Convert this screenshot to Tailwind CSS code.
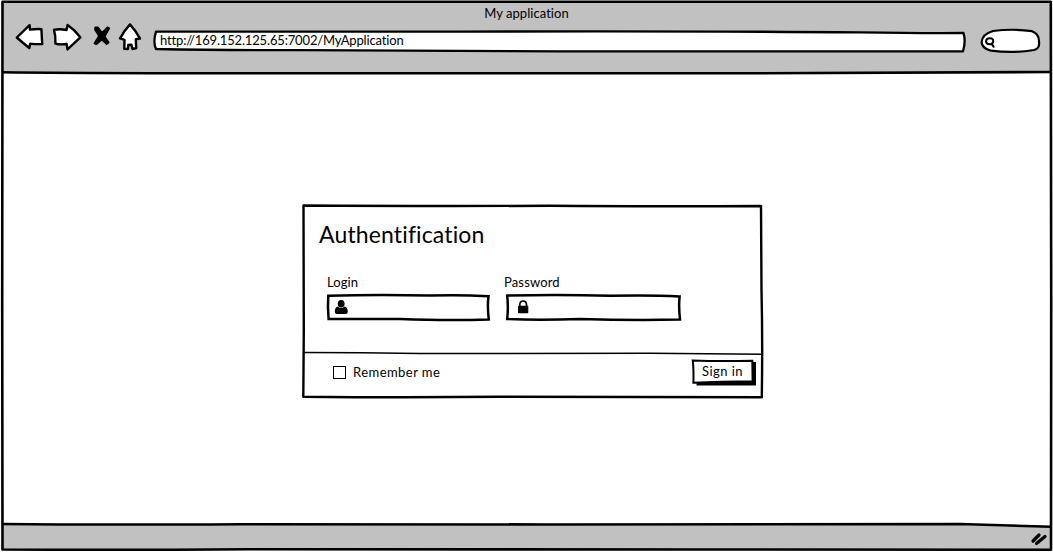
<!DOCTYPE html>
<html lang="en">
<head>
<meta charset="utf-8">
<title>My application</title>
<script src="https://cdn.jsdelivr.net/npm/@tailwindcss/browser@4"></script>
</head>
<body class="bg-white">
<div class="relative flex h-[552px] w-[1053px] flex-col overflow-hidden bg-white font-['Lato',sans-serif] text-[13px] leading-4 text-black">
  <header class="h-[73px] shrink-0 bg-[#c1c1c1] pt-[5px]">
    <h1 class="h-4 text-center tracking-[0.05px]">My application</h1>
    <div class="flex items-start pl-[14px]">
      <svg class="h-8 w-[137px] shrink-0" viewBox="14 21 137 32" fill="#fff" stroke="#000" stroke-width="2.4" stroke-linejoin="round" stroke-linecap="round">
        <path d="M16.8 37.5 L29.6 25.2 L30 29.6 Q36 28.8 41.4 29.2 L42.2 44 Q36 44.4 30.3 43.6 L29.3 48 Q23 43 16.8 37.5Z"/>
        <path d="M54 29.8 Q60 28.6 66.5 30 L67.6 25 Q75 30 80.4 37.4 L67.5 49.4 L66.6 44 Q60 45 55.4 43.6 Q55.8 36 54 29.8Z"/>
        <path d="M95.3 27.5 L98 27.5 L102 33 L107.5 27.4 L109.2 28.4 L104.6 36.5 L108.6 42.6 L106.6 44 L101.8 39.6 L96.2 44.2 L94.4 43.4 L99 36 L95 29.5Z" fill="#000" stroke-width="1.8"/>
        <path d="M130 24.4 Q136 31 140 38.6 L135.8 39.3 L136.2 48.2 L132.5 49 L131.4 44.8 L128.2 45 L128 49 L124.3 48.8 L124.5 39.8 L120 38.4 Q124 31 130 24.4Z"/>
      </svg>
      <div class="relative mt-2 h-6 w-[816px] shrink-0">
        <svg class="absolute inset-0 h-6 w-[816px]" viewBox="151 29 816 24"><path d="M156 31.6 Q300 31 460 31.6 Q700 31 860 32.4 Q920 33.3 963.5 33 Q966 41 963 51.4 L560 51.3 Q420 50.4 300 50.1 Q220 50.2 156 49 Q152.8 42 156 31.6Z" fill="#fff" stroke="#000" stroke-width="2.3" stroke-linejoin="round"/></svg>
        <span class="absolute top-[3px] left-[9px] whitespace-nowrap tracking-[-0.16px]">http://169.152.125.65:7002/MyApplication</span>
      </div>
      <svg class="mt-[5px] ml-3 h-7 w-[64px] shrink-0" viewBox="979 26 64 28" fill="#fff" stroke="#000" stroke-width="2.2" stroke-linecap="round"><path d="M993 31 Q1013 28.4 1032 31.2 Q1039.5 34 1039 42 Q1040 48.5 1034 50 Q1014 53.4 991 50.7 Q981.5 48 981.6 42 Q982.5 34 993 31Z"/><path d="M989.8 38.2 Q993.4 38.2 993.2 41.2 Q993.2 44.4 989.8 44.2 Q986.2 44.2 986 41.2 Q986.2 38.2 989.8 38.2Z M991.6 43.6 L993.6 46.8" stroke-width="2"/></svg>
    </div>
  </header>

  <main class="flex flex-1 pt-[131px] pl-[302px]">
    <section class="relative h-[196px] w-[462px]">
      <svg class="absolute inset-0 h-[196px] w-[462px]" viewBox="302 204 462 196" fill="none" stroke="#000" stroke-width="2.4" stroke-linejoin="round">
        <path d="M303.5 205.5 Q420 206.3 550 205.8 Q650 206.6 761 206 L761.5 290 Q762.7 340 761.8 397.3 Q620 397.4 500 396.8 Q400 397.8 303.3 396.7 L303.8 330 L303.5 205.5Z"/>
        <path d="M303 352.4 Q360 352.5 420 353.5 L650 353.2 L763 354.3" stroke-width="1.5"/>
      </svg>
      <h2 class="relative h-[70px] pt-4 pl-[17px] text-[23px] leading-7 tracking-[0.14px]">Authentification</h2>
      <div class="relative flex pl-[24px]">
        <label class="block w-[177px]">
          <span class="block h-[19px] pl-px tracking-[0.1px]">Login</span>
          <svg class="block h-[30px] w-[166px]" viewBox="326 293 166 30"><path d="M328.3 295.7 Q380 294.5 430 295.6 Q460 294.8 488.5 296.2 Q487.2 305 488.8 319.4 Q450 321 400 319 Q360 319.2 328.6 319 Q327.5 307 328.3 295.7Z" fill="#fff" stroke="#000" stroke-width="2.5"/><ellipse cx="341.2" cy="303.8" rx="3.4" ry="3.8"/><path d="M338 306.6 Q334.8 307.2 334.8 311.8 Q334.8 314 337 314 H345.6 Q347.8 314 347.8 311.8 Q347.6 307.2 344.4 306.6 Q341.2 309.6 338 306.6Z"/></svg>
        </label>
        <label class="block">
          <span class="block h-[19px] pl-px tracking-[0.15px]">Password</span>
          <svg class="block h-[30px] w-[180px]" viewBox="503 293 180 30"><path d="M507.2 295.6 Q560 294.5 610 295.8 Q650 294.8 679.6 296.5 Q678.5 306 680 319.6 Q630 320.6 580 318.9 Q540 320.3 507.2 319 Q508.5 307 507.2 295.6Z" fill="#fff" stroke="#000" stroke-width="2.5"/><rect x="518" y="305.7" width="10.3" height="7.5" rx="0.7"/><path d="M519.8 307 V304.5 Q520 301 523.1 301 Q526.3 301 526.5 304.5 V307" fill="none" stroke="#000" stroke-width="1.7"/></svg>
        </label>
      </div>
      <div class="relative mt-[35px] flex">
        <label class="flex h-8 flex-1 pt-[3px] pl-[31px]"><span class="mt-[5px] h-[13px] w-[13px] border border-black bg-white"></span><span class="mt-[3px] ml-[7px] tracking-[0.45px]">Remember me</span></label>
        <button class="relative mr-[7px] h-[30px] w-[67px]">
          <svg class="absolute inset-0 h-[30px] w-[67px]" viewBox="690 358 67 30"><path d="M697 362 H756 V385.5 H696.5Z"/><path d="M692.8 360.4 Q720 361.6 752.3 360.7 L752.6 381.3 Q720 381.8 693.4 382.7 Q693.8 370 692.8 360.4Z" fill="#fff" stroke="#000" stroke-width="2"/></svg>
          <span class="absolute top-[5px] left-3 whitespace-nowrap tracking-[0.45px]">Sign in</span>
        </button>
      </div>
    </section>
  </main>

  <footer class="h-[27px] shrink-0"><svg class="block h-[27px] w-[1053px]" viewBox="0 525 1053 27"><path d="M2 524.5 L960 524.5 L1051 527 V549 H2Z" fill="#c1c1c1"/><path d="M1033 541 L1039 535 M1036.5 543.5 L1045 536.5" stroke="#000" stroke-width="3.2" stroke-linecap="round"/></svg></footer>

  <svg class="pointer-events-none absolute inset-0 h-[552px] w-[1053px]" viewBox="0 0 1053 552" fill="none" stroke="#000" stroke-width="2.6" stroke-linejoin="round">
    <path d="M0 0H2V552H0Z M1052 0H1053V552H1052Z M0 0H1053V1H0Z" fill="#fff" stroke="none"/>
    <path d="M2.5 1.8 H1050.8 L1051.2 300 L1051 549.8 Q850 550.3 700 549.5 Q400 549.6 250 549.2 Q120 550.2 2.5 549.5 L2.2 300Z"/>
    <path d="M2 72.3 Q60 73 150 73.2 Q500 72.5 760 73.2 Q900 73.2 1051 72"/>
    <path d="M2 524 Q100 525 240 524.2 Q600 524.8 960 524 L1051 526.8"/>
  </svg>
</div>
</body>
</html>
